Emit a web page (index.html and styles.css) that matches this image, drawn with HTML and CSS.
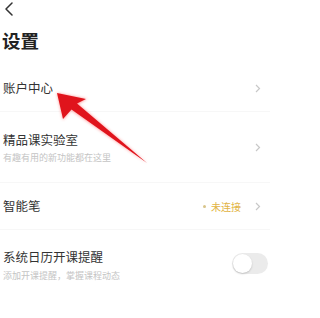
FILE: index.html
```html
<!DOCTYPE html>
<html lang="zh">
<head>
<meta charset="utf-8">
<link rel="stylesheet" href="styles.css">
</head>
<body>
<div class="page">
  <div class="topbar">
    <svg class="back" width="10" height="14" viewBox="0 0 10 14"><polyline points="8,1 2,7 8,13" fill="none" stroke="#333" stroke-width="1.5" stroke-linecap="round" stroke-linejoin="round"/></svg>
  </div>
  <h1 class="title">设置</h1>
  <div class="list">
    <div class="row row-single">
      <div class="main"><div class="label">账户中心</div></div>
      <svg class="chev" width="6" height="9" viewBox="0 0 6 9"><polyline points="1,1 4.5,4.5 1,8" fill="none" stroke="#c8c8c8" stroke-width="1.2"/></svg>
    </div>
    <div class="row row-double">
      <div class="main">
        <div class="label">精品课实验室</div>
        <div class="sub">有趣有用的新功能都在这里</div>
      </div>
      <svg class="chev" width="6" height="9" viewBox="0 0 6 9"><polyline points="1,1 4.5,4.5 1,8" fill="none" stroke="#c8c8c8" stroke-width="1.2"/></svg>
    </div>
    <div class="row row-single">
      <div class="main"><div class="label">智能笔</div></div>
      <div class="status"><span class="dot"></span>未连接</div>
      <svg class="chev" width="6" height="9" viewBox="0 0 6 9"><polyline points="1,1 4.5,4.5 1,8" fill="none" stroke="#c8c8c8" stroke-width="1.2"/></svg>
    </div>
    <div class="row row-double row-last">
      <div class="main">
        <div class="label">系统日历开课提醒</div>
        <div class="sub">添加开课提醒，掌握课程动态</div>
      </div>
      <div class="toggle"><div class="knob"></div></div>
    </div>
  </div>
  <svg class="arrow" width="270" height="318" viewBox="0 0 270 318">
    <defs>
      <filter id="glow" x="-20%" y="-20%" width="140%" height="140%">
        <feGaussianBlur stdDeviation="1.4"/>
      </filter>
    </defs>
    <polygon points="57,93 87,99 78,104 147,163 71,110 63,120" fill="#ff3b3b" opacity="0.5" filter="url(#glow)"/>
    <polygon points="57,93 86,99 77,103.5 147,163 71.5,109.5 63,119" fill="#e0141c"/>
  </svg>
</div>
</body>
</html>
```
FILE: styles.css
```css
html, body {
  margin: 0;
  padding: 0;
  background: #fff;
}
.page {
  position: relative;
  width: 270px;
  height: 318px;
  overflow: hidden;
  font-family: "Noto Sans CJK SC", "Noto Sans", sans-serif;
  color: #333;
}
.topbar {
  height: 28px;
  padding-left: 4px;
  padding-top: 2px;
  box-sizing: border-box;
}
.back {
  display: block;
}
.title {
  margin: 0 0 13px 2px;
  font-size: 18.5px;
  line-height: 24px;
  font-weight: 700;
  color: #222;
}
.list {
  display: flex;
  flex-direction: column;
}
.row {
  display: flex;
  align-items: center;
  padding: 0 9px 0 3px;
  border-bottom: 1px solid #f7f7f7;
  box-sizing: border-box;
}
.row-single {
  height: 47px;
}
.row-double {
  height: 71px;
}
.row-last {
  border-bottom: none;
  height: 70px;
  align-items: flex-start;
  padding-top: 19px;
}
.main {
  flex: 1;
}
.label {
  font-size: 12.5px;
  line-height: 16px;
  color: #333;
}
.sub {
  margin-top: 4px;
  font-size: 9px;
  line-height: 11px;
  color: #c4c4c4;
}
.row-last .sub {
  margin-top: 5px;
}
.chev {
  display: block;
}
.status {
  display: flex;
  align-items: center;
  font-size: 10px;
  color: #e2b445;
  margin-right: 14px;
}
.dot {
  width: 3px;
  height: 3px;
  border-radius: 50%;
  background: #d8c48a;
  margin-right: 5px;
}
.toggle {
  position: relative;
  width: 36px;
  height: 21px;
  border-radius: 11px;
  background: #ebebeb;
  margin-top: 4px;
  margin-right: -7px;
}
.knob {
  position: absolute;
  left: 1px;
  top: 1px;
  width: 19px;
  height: 19px;
  border-radius: 50%;
  background: #fff;
  box-shadow: 0 1px 2px rgba(0,0,0,0.18);
}
.arrow {
  position: absolute;
  left: 0;
  top: 0;
  pointer-events: none;
}
```
